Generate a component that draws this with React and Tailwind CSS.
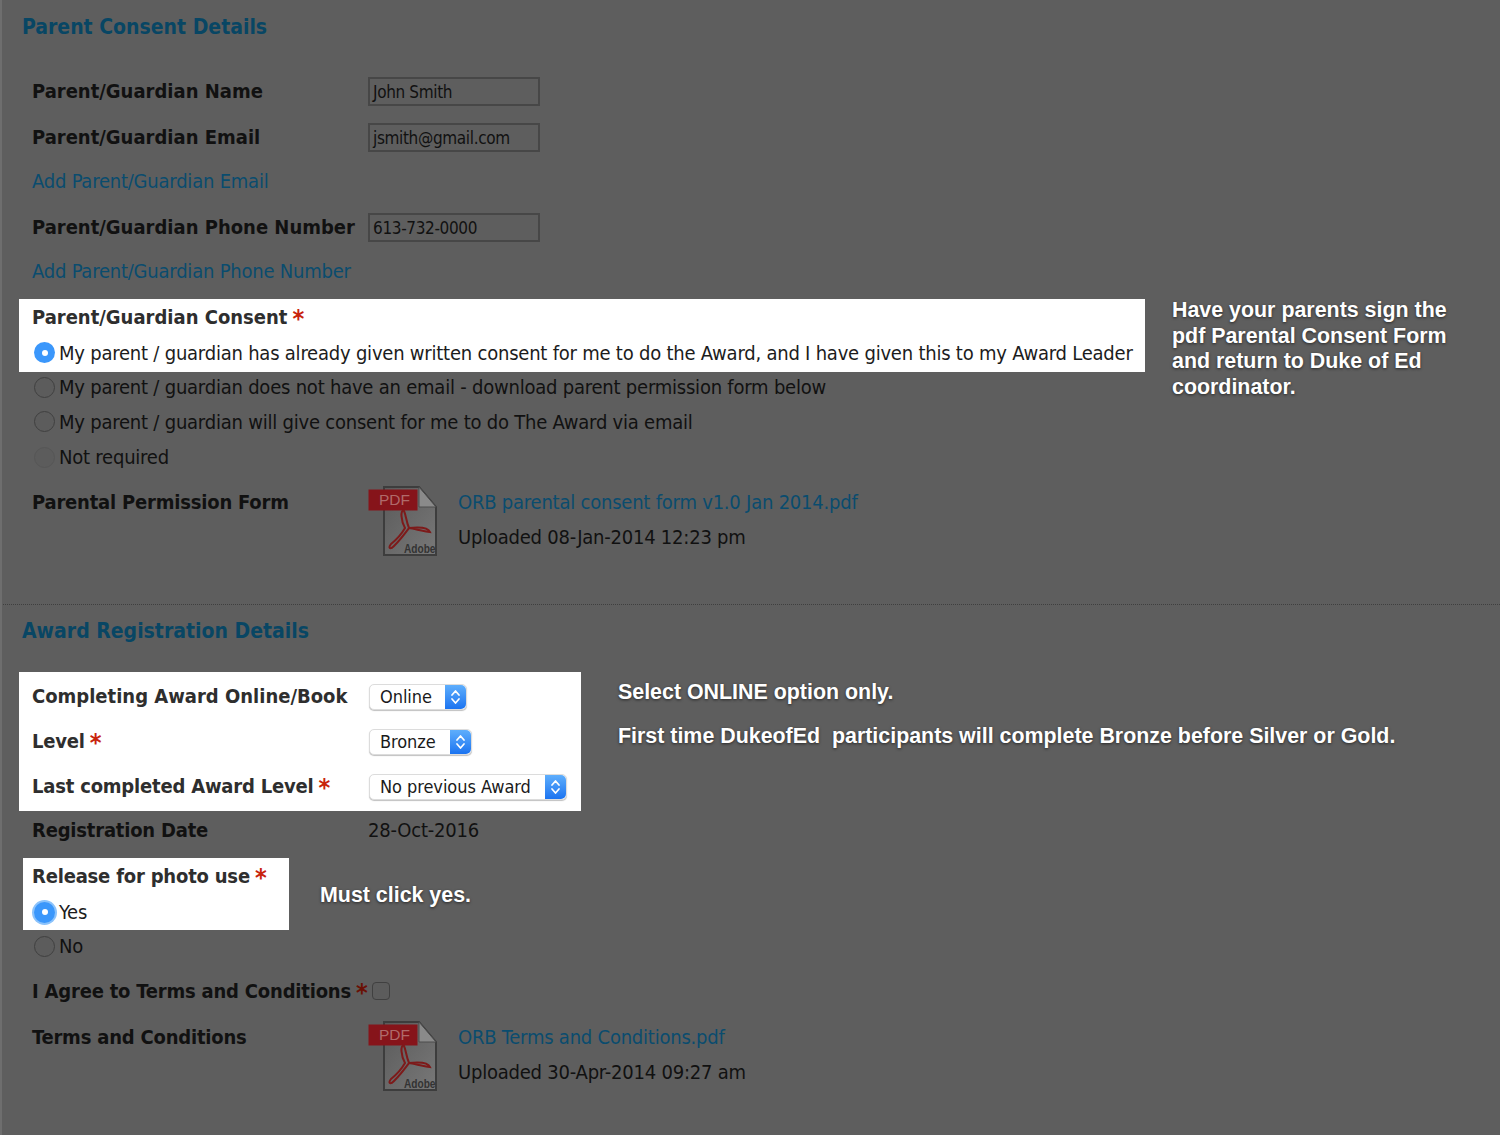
const labelClass = "text-[20px] font-bold leading-none";
const tightLabel = "text-[20px] font-bold leading-none tracking-[-0.2px]";
const bodyClass = "text-[20px] leading-none tracking-[-0.22px]";

function Star({ dim }) {
  return <span className={`ml-[5px] h-[20px] text-[25px] font-bold leading-[24px] ${dim ? "text-[#6a1005]" : "text-[#c8230c]"}`}>*</span>;
}

function Radio({ checked, glow, faint }) {
  if (checked) {
    return (
      <span className={`flex h-[21px] w-[21px] shrink-0 items-center justify-center rounded-full bg-[#3b97fb] ${glow ? "ring-[2px] ring-[#8cc3fb]" : ""}`}>
        <span className="h-[6px] w-[6px] rounded-full bg-white" />
      </span>
    );
  }
  return <span className={`block h-[21px] w-[21px] shrink-0 rounded-full border ${faint ? "border-[#565656]" : "border-[#404040]"} bg-[#5c5c5c]`} />;
}

function TextField({ value }) {
  return (
    <div className="flex h-[29px] w-[172px] items-center border-2 border-[#474747] pt-[3px] pl-[3px] text-[17px] leading-none tracking-[-0.35px] text-[#111]">
      {value}
    </div>
  );
}

function Select({ label, width }) {
  return (
    <div className={`mt-[2px] ml-[1px] flex h-[26px] items-stretch rounded-[5px] border border-[#dcdcdc] bg-white shadow-[0_1px_1px_rgba(0,0,0,0.25)] ${width}`}>
      <span className="flex-1 self-center pl-[10px] text-[18px] leading-none tracking-[-0.05px] text-[#1a1a1a]">{label}</span>
      <span className="flex w-[21px] items-center justify-center rounded-r-[5px] bg-gradient-to-b from-[#5eaefc] to-[#1a73f0]">
        <svg width="11" height="18" viewBox="0 0 11 18" fill="none" stroke="#fff" strokeWidth="1.7" strokeLinecap="round" strokeLinejoin="round">
          <path d="M2 7 5.5 3 9 7" />
          <path d="M2 11 5.5 15 9 11" />
        </svg>
      </span>
    </div>
  );
}

function PdfIcon() {
  return (
    <svg width="70" height="73" viewBox="0 0 70 73" className="shrink-0">
      <defs>
        <linearGradient id="pdf-page" x1="0" y1="0" x2="1" y2="1">
          <stop offset="0" stopColor="#5a5a5a" />
          <stop offset="1" stopColor="#787878" />
        </linearGradient>
      </defs>
      <path d="M16 2H51L68 22V70H16Z" fill="url(#pdf-page)" stroke="#3d3d3d" strokeWidth="2" />
      <path d="M51 2V22H68Z" fill="#8a8a8a" stroke="#4c4c4c" />
      <rect x="0.5" y="4.5" width="49" height="21" fill="#86141a" />
      <text x="11" y="20" fontSize="15.5" fill="#b06a6a" fontFamily="Liberation Sans, sans-serif">PDF</text>
      <path d="M36 26C32 24 33 36 37 43C33 50 28 55 23 59C20 63 22 65 26 61C33 54 38 47 41 43C47 44 55 46 62 47C60 42 50 42 41 43C38 36 38 30 36 26Z" fill="none" stroke="#7d1a1a" strokeWidth="2" />
      <text transform="translate(36 68) scale(0.78 1)" fontSize="13" fontWeight="700" fill="#333" fontFamily="Liberation Sans, sans-serif">Adobe</text>
    </svg>
  );
}

function FileRow({ title, link, uploaded, gap }) {
  return (
    <div className={`ml-[30px] flex h-[73px] ${gap}`}>
      <div className={`w-[336px] pt-[7px] text-[#111] ${tightLabel}`}>{title}</div>
      <PdfIcon />
      <div className="ml-[20px]">
        <div className={`mt-[7px] text-[#0a4c6e] ${bodyClass}`}>{link}</div>
        <div className={`mt-[15px] text-[#111] ${bodyClass}`}>{uploaded}</div>
      </div>
    </div>
  );
}

function Note({ children, className }) {
  return (
    <div className={`h-0 shrink-0 font-['Liberation_Sans',Arial,sans-serif] text-[21.4px] leading-[25.5px] font-bold text-white [text-shadow:0_1px_3px_rgba(0,0,0,0.6)] ${className}`}>
      {children}
    </div>
  );
}

export default function App() {
  return (
    <div className="h-[1135px] overflow-hidden border-l-2 border-[#6e6e6e] bg-[#5e5e5e] font-['DejaVu_Sans_Condensed','DejaVu_Sans',sans-serif] text-[#111] font-stretch-condensed">
      {/* Parent consent */}
      <h2 className="ml-[20px] flex h-[54px] items-center pt-[2px] text-[21px] font-bold text-[#084664]">Parent Consent Details</h2>

      <div className="mt-[14px] ml-[30px] flex h-[46px] items-center">
        <div className={`w-[336px] ${labelClass}`}>Parent/Guardian Name</div>
        <TextField value="John Smith" />
      </div>
      <div className="ml-[30px] flex h-[46px] items-center">
        <div className={`w-[336px] ${labelClass}`}>Parent/Guardian Email</div>
        <TextField value="jsmith@gmail.com" />
      </div>
      <div className={`ml-[30px] flex h-[42px] items-center text-[#0a4c6e] ${bodyClass}`}>Add Parent/Guardian Email</div>
      <div className="mt-[2px] ml-[30px] flex h-[46px] items-center">
        <div className={`w-[336px] ${labelClass}`}>Parent/Guardian Phone Number</div>
        <TextField value="613-732-0000" />
      </div>
      <div className={`ml-[30px] flex h-[42px] items-center text-[#0a4c6e] ${bodyClass}`}>Add Parent/Guardian Phone Number</div>

      <div className="mt-[7px] ml-[17px] flex">
        <div className="h-[73px] w-[1126px] shrink-0 bg-white pl-[13px] text-[#2e2e2e]">
          <div className="flex h-[36px] items-center">
            <span className={labelClass}>Parent/Guardian Consent</span>
            <Star />
          </div>
          <div className="flex h-[35px] items-center">
            <span className="ml-[2px]"><Radio checked /></span>
            <span className={`ml-[4px] whitespace-nowrap text-[#1c1c1c] ${bodyClass}`}>My parent / guardian has already given written consent for me to do the Award, and I have given this to my Award Leader</span>
          </div>
        </div>
        <Note className="mt-[-1px] ml-[27px] w-[300px]">
          Have your parents sign the<br />pdf Parental Consent Form<br />and return to Duke of Ed<br />coordinator.
        </Note>
      </div>

      <div className="ml-[32px] flex h-[30px] items-center">
        <Radio />
        <span className={`ml-[4px] ${bodyClass}`}>My parent / guardian does not have an email - download parent permission form below</span>
      </div>
      <div className="mt-[2px] ml-[32px] flex h-[35px] items-center">
        <Radio />
        <span className={`ml-[4px] ${bodyClass}`}>My parent / guardian will give consent for me to do The Award via email</span>
      </div>
      <div className="ml-[32px] flex h-[36px] items-center">
        <Radio faint />
        <span className={`ml-[4px] ${bodyClass}`}>Not required</span>
      </div>

      <FileRow title="Parental Permission Form" link="ORB parental consent form v1.0 Jan 2014.pdf" uploaded="Uploaded 08-Jan-2014 12:23 pm" gap="mt-[10px]" />

      <div className="mt-[46px] ml-[1px] border-t border-dotted border-[#3f3f3f]" />

      {/* Award registration */}
      <h2 className="ml-[20px] flex h-[52px] items-center pt-[2px] text-[21px] font-bold text-[#084664]">Award Registration Details</h2>

      <div className="mt-[15px] ml-[17px] flex">
        <div className="h-[139px] w-[562px] shrink-0 bg-white pt-[2px] pl-[13px] text-[#2e2e2e]">
          <div className="flex h-[44px] items-center">
            <div className={`w-[336px] ${labelClass}`}>Completing Award Online/Book</div>
            <Select label="Online" width="w-[98px]" />
          </div>
          <div className="flex h-[45px] items-center">
            <div className="flex w-[336px] items-center">
              <span className={tightLabel}>Level</span>
              <Star />
            </div>
            <Select label="Bronze" width="w-[103px]" />
          </div>
          <div className="flex h-[45px] items-center">
            <div className="flex w-[336px] items-center">
              <span className={tightLabel}>Last completed Award Level</span>
              <Star />
            </div>
            <Select label="No previous Award" width="w-[198px]" />
          </div>
        </div>
        <Note className="mt-[8px] ml-[37px] w-[820px]">
          Select ONLINE option only.
          <div className="mt-[18px] whitespace-pre">First time DukeofEd  participants will complete Bronze before Silver or Gold.</div>
        </Note>
      </div>

      <div className="ml-[30px] flex h-[38px] items-center">
        <div className={`w-[336px] ${tightLabel}`}>Registration Date</div>
        <div className={bodyClass}>28-Oct-2016</div>
      </div>

      <div className="mt-[9px] ml-[21px] flex">
        <div className="h-[72px] w-[266px] shrink-0 bg-white pl-[9px] text-[#2e2e2e]">
          <div className="flex h-[36px] items-center">
            <span className={tightLabel}>Release for photo use</span>
            <Star />
          </div>
          <div className="flex h-[36px] items-center">
            <span className="ml-[2px]"><Radio checked glow /></span>
            <span className={`ml-[4px] text-[#1c1c1c] ${bodyClass}`}>Yes</span>
          </div>
        </div>
        <Note className="mt-[25px] ml-[31px] w-[200px]">Must click yes.</Note>
      </div>

      <div className="ml-[32px] flex h-[32px] items-center">
        <Radio />
        <span className={`ml-[4px] ${bodyClass}`}>No</span>
      </div>

      <div className="mt-[13px] ml-[30px] flex h-[32px] items-center">
        <span className={tightLabel}>I Agree to Terms and Conditions</span>
        <Star dim />
        <span className="ml-[4px] block h-[18px] w-[18px] rounded-[4px] border border-[#404040] bg-[#5c5c5c]" />
      </div>

      <FileRow title="Terms and Conditions" link="ORB Terms and Conditions.pdf" uploaded="Uploaded 30-Apr-2014 09:27 am" gap="mt-[13px]" />
    </div>
  );
}
